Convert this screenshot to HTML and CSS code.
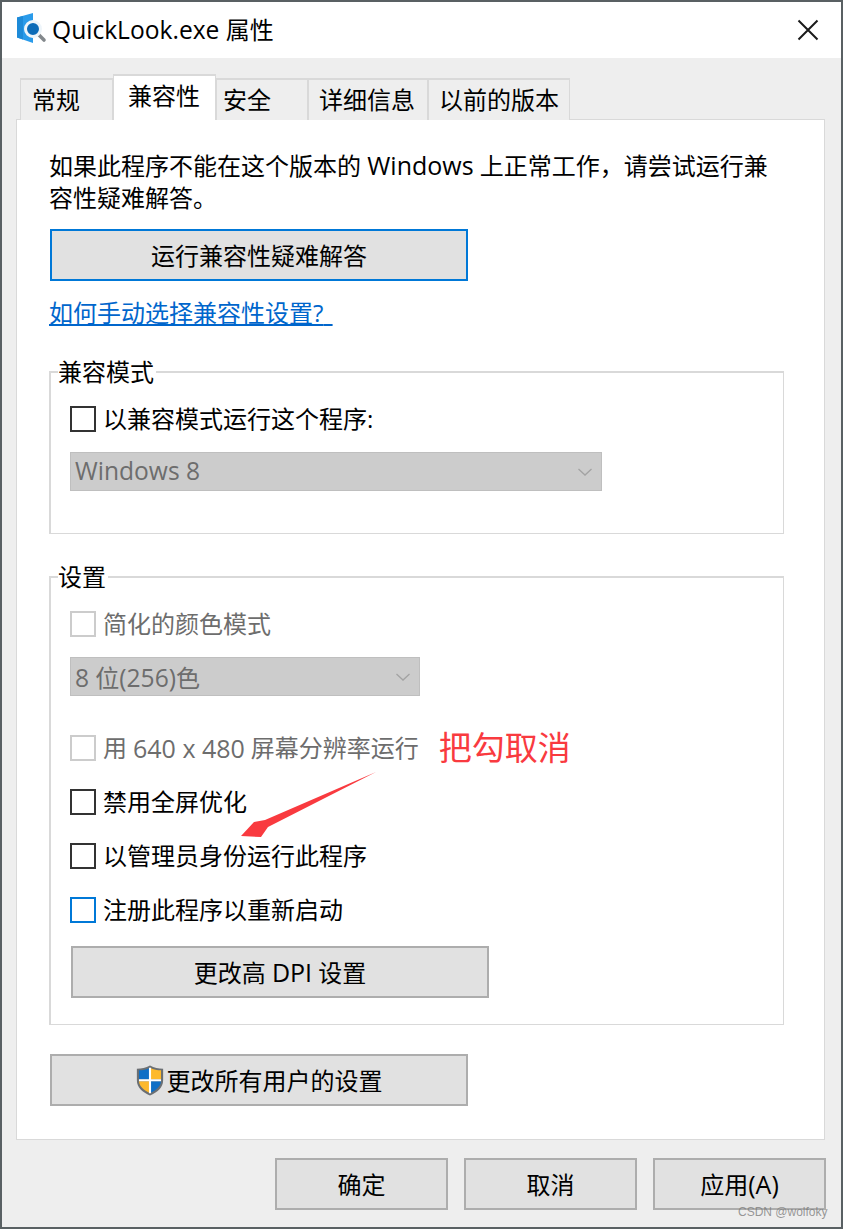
FILE: index.html
```html
<!DOCTYPE html>
<html lang="zh-CN">
<head>
  <meta charset="UTF-8">
  <meta name="viewport" content="width=device-width, initial-scale=1.0">
  <title>QuickLook.exe 属性</title>
  <link rel="stylesheet" href="styles.css">
</head>
<body>
  <div class="dialog">
    <div class="titlebar">
      <svg class="app-icon" width="30" height="34" viewBox="0 0 30 34">
        <path d="M0 4.5 L16 0 V30 L0 24.5 Z" fill="#2a9bea"/>
        <path d="M0 4.5 L6 3 V26.5 L0 24.5 Z" fill="#1d8ad8"/>
        <path d="M21 21 L27 27" stroke="#83888c" stroke-width="3.6" stroke-linecap="round"/>
        <circle cx="16" cy="16" r="7.5" fill="#0d6cb8" stroke="#eef5fa" stroke-width="3"/>
      </svg>
      <span class="title-text"><span class="lat">QuickLook.exe</span> 属性</span>
      <svg class="close-icon" width="22" height="22" viewBox="0 0 22 22">
        <path d="M1.5 1.5 L20.5 20.5 M20.5 1.5 L1.5 20.5" stroke="#1a1a1a" stroke-width="2"/>
      </svg>
    </div>

    <div class="content">
      <div class="tabs">
        <div class="tab tab-first">常规</div>
        <div class="tab active">兼容性</div>
        <div class="tab tab-safe">安全</div>
        <div class="tab tab-detail">详细信息</div>
        <div class="tab tab-prev">以前的版本</div>
      </div>

      <div class="panel">
        <p class="intro">如果此程序不能在这个版本的 <span class="lat">Windows</span> 上正常工作，请尝试运行兼<br>容性疑难解答。</p>
        <button class="btn btn-focus">运行兼容性疑难解答</button>
        <a class="help-link" href="#">如何手动选择兼容性设置?<span class="trail">&nbsp;</span></a>

        <fieldset class="group group-compat">
          <legend>兼容模式</legend>
          <div class="check-row row-first"><span class="box"></span>以兼容模式运行这个程序:</div>
          <div class="select select-wide">
            <span class="lat">Windows 8</span>
            <svg width="14" height="8" viewBox="0 0 14 8"><path d="M0.5 1 L7 7 L13.5 1" fill="none" stroke="#a3a3a3" stroke-width="1.3"/></svg>
          </div>
        </fieldset>

        <fieldset class="group group-settings">
          <legend>设置</legend>
          <div class="check-row row-first disabled"><span class="box"></span>简化的颜色模式</div>
          <div class="select select-narrow">
            <span><span class="lat">8</span> 位<span class="lat">(256)</span>色</span>
            <svg width="14" height="8" viewBox="0 0 14 8"><path d="M0.5 1 L7 7 L13.5 1" fill="none" stroke="#a3a3a3" stroke-width="1.3"/></svg>
          </div>
          <div class="check-row disabled row-640"><span class="box"></span><span>用</span><span class="lat sp">640 x 480</span><span>屏幕分辨率运行</span><span class="note">把勾取消</span></div>
          <div class="check-row row-tight"><span class="box"></span>禁用全屏优化</div>
          <div class="check-row row-tight"><span class="box"></span>以管理员身份运行此程序</div>
          <div class="check-row row-tight"><span class="box box-focus"></span>注册此程序以重新启动</div>
          <button class="btn btn-dpi">更改高 <span class="lat">DPI</span> 设置</button>
        </fieldset>

        <button class="btn btn-admin">
          <svg class="shield" width="28" height="31" viewBox="1 0.5 26 29.5">
            <path d="M14 1 C10 3.5 6 4 1.5 4 V15 C1.5 22 7 26.5 14 29.5 C21 26.5 26.5 22 26.5 15 V4 C22 4 18 3.5 14 1 Z" fill="#6b6f73"/>
            <path d="M14 3 C10.5 5 7 5.5 3.5 5.6 V14 H14 Z" fill="#0f6fc6"/>
            <path d="M14 3 C17.5 5 21 5.5 24.5 5.6 V14 H14 Z" fill="#fdb92c"/>
            <path d="M3.5 16 H14 V27.2 C8 24.6 4 21 3.5 16 Z" fill="#fdb92c"/>
            <path d="M24.5 16 H14 V27.2 C20 24.6 24 21 24.5 16 Z" fill="#0f6fc6"/>
            <path d="M14 3 V27.5 M3.5 15 H24.5" stroke="#fff" stroke-width="2"/>
          </svg>更改所有用户的设置
        </button>
      </div>

      <div class="footer">
        <button class="btn btn-footer">确定</button>
        <button class="btn btn-footer">取消</button>
        <button class="btn btn-footer">应用<span class="lat">(A)</span></button>
      </div>
    </div>
  </div>

  <!-- red arrow drawn over the dialog -->
  <svg class="arrow" width="843" height="1229" viewBox="0 0 843 1229">
    <path d="M376 772 L268 827 L261 837 L241 836 L254 822 L265 820 Z" fill="#f93a3f"/>
  </svg>
  <div class="watermark">CSDN @wolfoky</div>
</body>
</html>
```

FILE: styles.css
```css
* {
  box-sizing: border-box;
}

html, body {
  margin: 0;
  padding: 0;
}

body {
  width: 843px;
  height: 1229px;
  padding: 2px;
  position: relative;
  overflow: hidden;
  background-color: #596063;
  font-family: "Open Sans", "Noto Sans CJK SC", sans-serif;
  font-size: 24px;
  color: #000;
}

.lat {
  font-size: 25px;
  line-height: 1;
}

.dialog {
  width: 839px;
  height: 1225px;
  display: flex;
  flex-direction: column;
  background-color: #eeeeee;
}

.titlebar {
  height: 56px;
  flex: none;
  display: flex;
  align-items: center;
  padding-left: 15px;
  background-color: #fff;
}

.app-icon {
  flex: none;
}

.title-text {
  margin-left: 5px;
  line-height: 32px;
  white-space: nowrap;
}

.title-text .lat {
  font-size: 24.6px;
}

.close-icon {
  margin-left: auto;
  margin-right: 22px;
}

.content {
  flex: 1;
  padding: 16px 14px 0;
}

.tabs {
  display: flex;
  align-items: flex-end;
  height: 46px;
  padding-left: 4px;
  position: relative;
  z-index: 1;
  margin-bottom: -1px;
}

.tab {
  height: 42px;
  padding: 4px 0 0 11px;
  line-height: 32px;
  border: 2px solid #d9d9d9;
  border-left-width: 1px;
  border-right-width: 1px;
  border-bottom: none;
  background-color: #eeeeee;
  white-space: nowrap;
}

.tab-first {
  width: 93px;
}

.active {
  width: 103px;
  height: 46px;
  padding: 4px 0 0 14px;
  background-color: #fff;
}

.tab-safe {
  width: 92px;
  padding-left: 6px;
}

.tab-detail {
  width: 120px;
  padding-left: 10px;
}

.tab-prev {
  width: 142px;
  padding-left: 10px;
}

.panel {
  width: 809px;
  height: 1021px;
  padding: 30px 40px 0 32px;
  border: 1px solid #d9d9d9;
  background-color: #fff;
}

.intro {
  width: 730px;
  margin: 0;
  line-height: 32px;
  white-space: nowrap;
}

.btn {
  display: block;
  padding: 0 0 2px;
  border: 2px solid #adadad;
  background-color: #e1e1e1;
  font-family: inherit;
  font-size: 24px;
  color: #000;
}

.btn-focus {
  width: 418px;
  height: 52px;
  margin: 15px 0 0 1px;
  border-color: #0078d7;
}

.help-link {
  display: block;
  margin-top: 16px;
  line-height: 32px;
  color: #0066cc;
  text-decoration: underline;
}

.trail {
  letter-spacing: 3px;
}

.group {
  width: 735px;
  margin: 0;
  padding: 0 0 0 19px;
  border: 1px solid #d9d9d9;
  border-top-width: 2px;
  border-left-width: 2px;
  min-width: 0;
}

.group legend {
  margin-left: -12px;
  padding: 0 2px 0 0;
  line-height: 32px;
}

.group-compat {
  height: 178px;
  margin-top: 27px;
}

.group-settings {
  height: 464px;
  margin-top: 27px;
}

.check-row {
  display: flex;
  align-items: center;
  height: 32px;
  line-height: 32px;
  margin-top: 2px;
  white-space: nowrap;
}

.row-first {
  margin-top: 15px;
}

.box {
  flex: none;
  width: 26px;
  height: 26px;
  margin-right: 7px;
  border: 2px solid #333;
  background-color: #fff;
}

.box-focus {
  border-color: #0078d7;
}

.disabled {
  color: #6d6d6d;
}

.disabled .box {
  border-color: #cccccc;
}

.sp {
  margin: 0 6px;
}

.select {
  height: 39px;
  margin-top: 17px;
  padding: 0 9px 0 4px;
  display: flex;
  align-items: center;
  justify-content: space-between;
  border: 1px solid #bfbfbf;
  background-color: #cccccc;
  color: #6d6d6d;
}

.select .lat {
  font-size: 24.6px;
}

.select-wide {
  width: 532px;
}

.select-narrow {
  width: 350px;
}

.row-640 {
  margin-top: 36px;
}

.row-tight {
  margin-top: 22px;
}

.note {
  margin-left: 20px;
  font-size: 33px;
  line-height: 32px;
  color: #f93a3f;
}

.btn-dpi {
  width: 418px;
  height: 52px;
  margin: 20px 0 0 1px;
}

.btn-admin {
  width: 418px;
  height: 52px;
  margin: 29px 0 0 1px;
  display: flex;
  align-items: center;
  justify-content: center;
}

.shield {
  flex: none;
  margin: 2px 3px 0 0;
}

.footer {
  display: flex;
  justify-content: flex-end;
  gap: 16px;
  margin-top: 18px;
  margin-right: 1px;
}

.btn-footer {
  width: 173px;
  height: 52px;
}

.arrow {
  position: absolute;
  left: 0;
  top: 0;
  pointer-events: none;
}

.watermark {
  position: absolute;
  left: 738px;
  top: 1204px;
  font-family: "Liberation Sans", sans-serif;
  font-size: 12px;
  line-height: 16px;
  color: rgba(120, 120, 120, 0.75);
}
```
